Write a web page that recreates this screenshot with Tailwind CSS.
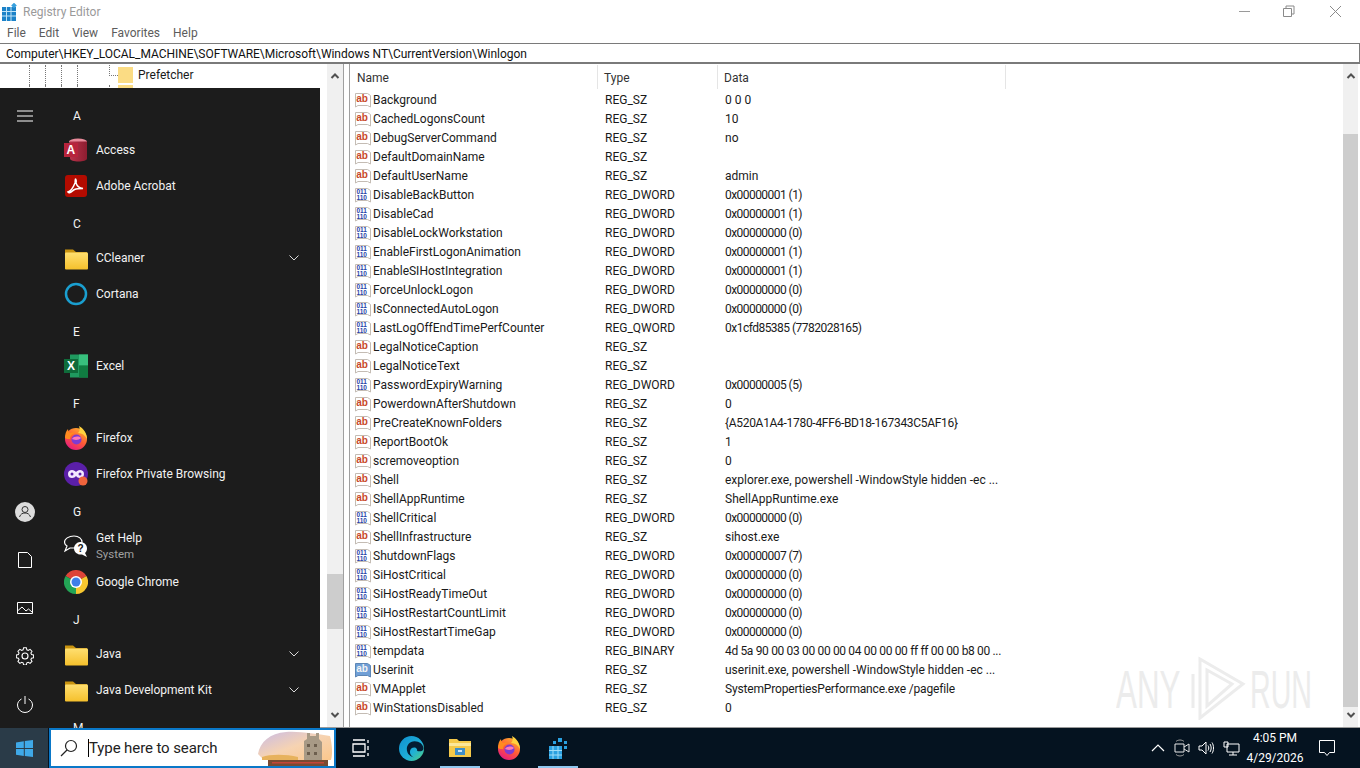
<!DOCTYPE html>
<html><head><meta charset="utf-8"><script src="https://cdn.jsdelivr.net/npm/@tailwindcss/browser@4"></script><title>Registry Editor</title></head>
<body class="overflow-hidden">
<svg class="absolute w-0 h-0" aria-hidden="true">
<defs>
<linearGradient id="fold" x1="0" y1="0" x2="0" y2="1"><stop offset="0" stop-color="#ffdf70"/><stop offset="1" stop-color="#f5c02c"/></linearGradient>
<linearGradient id="ff" x1="0.8" y1="0" x2="0.2" y2="1"><stop offset="0" stop-color="#ffb52e"/><stop offset="0.5" stop-color="#ff5a36"/><stop offset="1" stop-color="#e31587"/></linearGradient>
<linearGradient id="edge" x1="0" y1="0" x2="1" y2="1"><stop offset="0" stop-color="#0f8fd0"/><stop offset="0.6" stop-color="#1fb0d8"/><stop offset="1" stop-color="#54d27a"/></linearGradient>
<linearGradient id="acc" x1="0" y1="0" x2="1" y2="0"><stop offset="0" stop-color="#b9324a"/><stop offset="1" stop-color="#8c1d30"/></linearGradient>
<linearGradient id="sky" x1="0" y1="0" x2="1" y2="1"><stop offset="0" stop-color="#c9bbe6"/><stop offset="0.5" stop-color="#f6d3b2"/><stop offset="1" stop-color="#fbc78b"/></linearGradient>
<symbol id="ab" viewBox="0 0 16 16"><path d="M.5 1.500h12l3 2v11.500l-3-1.500H3L.5 15z" fill="#fff" stroke="#c4bcb4"/><text x="1.200" y="10" font-family="Liberation Sans" font-weight="700" font-size="10" fill="#c8482a">ab</text></symbol>
<symbol id="absel" viewBox="0 0 16 16"><path d="M.5 1.500h12l3 2v11.500l-3-1.500H3L.5 15z" fill="#6f9fd6" stroke="#5d86b5"/><text x="1.200" y="10" font-family="Liberation Sans" font-weight="700" font-size="10" fill="#f4f4f4">ab</text></symbol>
<symbol id="bin" viewBox="0 0 16 16"><path d="M.5 1.500h12l3 2v11.500l-3-1.500H3L.5 15z" fill="#fff" stroke="#c4bcb4"/><text x="1.500" y="7" font-family="Liberation Sans" font-weight="700" font-size="6.500" fill="#2742a8">011</text><text x="1.500" y="13" font-family="Liberation Sans" font-weight="700" font-size="6.500" fill="#2742a8">110</text></symbol>
<symbol id="folder" viewBox="0 0 24 24"><path d="M1 3.500h8l3 2.500h11v16.500H1z" fill="#c9930f"/><rect x="1" y="6.500" width="23" height="17" rx="1" fill="url(#fold)"/></symbol>
<symbol id="firefox" viewBox="0 0 24 24"><circle cx="12" cy="13" r="11" fill="url(#ff)"/><path d="M15 0c4 2 8 7 8 13-2-4-5-6-9-6 2-2 2-4 1-7z" fill="#ffd23f"/><path d="M1 12C1 8 2 5 4 3c0 2 1 3 2 4 2-1 4-1 5 0-3 1-5 3-5 6-2 0-4 0-5-1z" fill="#ff8a1f"/><circle cx="12.500" cy="13.500" r="5" fill="#7f3bd0"/><path d="M8 13c2-3 7-3 9-1-1 1-3 2-5 2-2 0-3-1-4-1z" fill="#ff7ab8"/></symbol>
<symbol id="chevron" viewBox="0 0 12 8"><path d="M1.500 1.500 6 6l4.500-4.500" fill="none" stroke="#d8d8d8" stroke-width="1"/></symbol>
<symbol id="up" viewBox="0 0 10 8"><path d="M1.500 6 5 2.500 8.500 6" fill="none" stroke="#505050" stroke-width="2"/></symbol>
<symbol id="down" viewBox="0 0 10 8"><path d="M1.500 2 5 5.500 8.500 2" fill="none" stroke="#505050" stroke-width="2"/></symbol>
</defs>
</svg>
<div class="relative h-screen w-full flex flex-col bg-white text-[12px] text-[#1a1a1a] overflow-hidden font-['Roboto','Noto_Sans',sans-serif]">
  <!-- title bar -->
  <div class="h-[21px] flex items-center shrink-0">
    <svg class="w-[18px] h-[18px] ml-[1px] mt-[2px]" viewBox="0 0 18 18"><rect x="1" y="4" width="14" height="14" fill="#1c82c8"/><path d="M1 8.500h14M1 13h14M5.500 4v14M10 4v14" stroke="#bfe3f7" stroke-width="1"/><rect x="11" y="0.500" width="4" height="4" fill="#39a0dd" transform="rotate(45 13 2.500)"/></svg>
    <span class="ml-[4px] mt-[2px] text-[#9a9a9a]">Registry Editor</span>
    <div class="ml-auto flex items-center mt-[1px]">
      <svg class="w-[46px] h-[21px]" viewBox="0 0 46 21"><path d="M17 10.500h11" stroke="#9a9a9a"/></svg>
      <svg class="w-[46px] h-[21px] -ml-[4px]" viewBox="0 0 46 21"><path d="M19.500 7.500h8v8h-8zM22 7.500V5h8v8h-2.500" fill="none" stroke="#8a8a8a"/></svg>
      <svg class="w-[46px] h-[21px] ml-[2px] mr-[2px]" viewBox="0 0 46 21"><path d="M18 5l11 11M29 5 18 16" stroke="#8a8a8a"/></svg>
    </div>
  </div>
  <!-- menu -->
  <div class="h-[22px] flex items-center shrink-0 pl-[7px] pt-[1px] gap-[13px] text-[#5c5c5c]"><span>File</span><span>Edit</span><span>View</span><span>Favorites</span><span>Help</span></div>
  <!-- address -->
  <div class="h-[21px] shrink-0 flex items-center border-t border-b-2 border-r border-t-[#7a7a7a] border-b-[#7a7a7a] border-r-[#7a7a7a] pl-[6px] pt-[1px] text-[#111] tracking-[-.04px]">Computer\HKEY_LOCAL_MACHINE\SOFTWARE\Microsoft\Windows NT\CurrentVersion\Winlogon</div>
  <!-- main -->
  <div class="flex-1 min-h-0 flex border-b border-[#9a9a9a]">
    <div class="w-[344px] shrink-0 flex border-r border-[#a0a0a0]">
      <div class="w-[327px] shrink-0 pt-[1px]">
        <div class="flex h-[20px] pl-[29px]">
          <span class="w-[16px] border-l border-dotted border-[#777]"></span><span class="w-[16px] border-l border-dotted border-[#777]"></span><span class="w-[16px] border-l border-dotted border-[#777]"></span><span class="w-[32px] border-l border-dotted border-[#777]"></span>
          <span class="w-[9px] border-l border-dotted border-[#777] h-[11px] border-b"></span>
          <svg class="w-[15px] h-[16px] mt-[2px]" viewBox="0 0 15 16"><rect width="15" height="16" fill="#fbdc84"/></svg>
          <span class="ml-[5px] leading-[20px]">Prefetcher</span>
        </div>
        <div class="flex h-[20px] pl-[29px]">
          <span class="w-[16px] border-l border-dotted border-[#777]"></span><span class="w-[16px] border-l border-dotted border-[#777]"></span><span class="w-[16px] border-l border-dotted border-[#777]"></span><span class="w-[32px] border-l border-dotted border-[#777]"></span>
          <span class="w-[9px] border-l border-dotted border-[#777]"></span>
          <svg class="w-[15px] h-[16px]" viewBox="0 0 15 16"><rect width="15" height="16" fill="#fbdc84"/></svg>
        </div>
      </div>
      <div class="flex-1 bg-[#f0f0f0] flex flex-col items-center justify-between py-[8px]">
        <svg class="w-[10px] h-[8px]"><use href="#up"/></svg>
        <div class="flex-1 w-full flex flex-col justify-end pb-[82px]"><div class="h-[55px] bg-[#cdcdcd]"></div></div>
        <svg class="w-[10px] h-[8px]"><use href="#down"/></svg>
      </div>
    </div>
    <div class="w-[5px] shrink-0"></div>
    <div class="flex-1 min-w-0 flex border-l border-[#a0a0a0]">
      <div class="flex-1 min-w-0">
        <div class="h-[26px] flex items-center text-[#333]">
          <span class="w-[248px] h-[24px] border-r border-[#e5e5e5] pl-[7px] leading-[26px]">Name</span>
          <span class="w-[120px] h-[24px] border-r border-[#e5e5e5] pl-[6px] leading-[26px]">Type</span>
          <span class="w-[288px] h-[24px] border-r border-[#e5e5e5] pl-[6px] leading-[26px]">Data</span>
        </div>
        <div class="flex h-[19px] items-center"><svg class="w-4 h-4 ml-[5px] shrink-0"><use href="#ab"/></svg><span class="w-[232px] ml-[2px]">Background</span><span class="w-[120px]">REG_SZ</span><span>0 0 0</span></div>
        <div class="flex h-[19px] items-center"><svg class="w-4 h-4 ml-[5px] shrink-0"><use href="#ab"/></svg><span class="w-[232px] ml-[2px]">CachedLogonsCount</span><span class="w-[120px]">REG_SZ</span><span>10</span></div>
        <div class="flex h-[19px] items-center"><svg class="w-4 h-4 ml-[5px] shrink-0"><use href="#ab"/></svg><span class="w-[232px] ml-[2px]">DebugServerCommand</span><span class="w-[120px]">REG_SZ</span><span>no</span></div>
        <div class="flex h-[19px] items-center"><svg class="w-4 h-4 ml-[5px] shrink-0"><use href="#ab"/></svg><span class="w-[232px] ml-[2px]">DefaultDomainName</span><span class="w-[120px]">REG_SZ</span><span></span></div>
        <div class="flex h-[19px] items-center"><svg class="w-4 h-4 ml-[5px] shrink-0"><use href="#ab"/></svg><span class="w-[232px] ml-[2px]">DefaultUserName</span><span class="w-[120px]">REG_SZ</span><span>admin</span></div>
        <div class="flex h-[19px] items-center"><svg class="w-4 h-4 ml-[5px] shrink-0"><use href="#bin"/></svg><span class="w-[232px] ml-[2px]">DisableBackButton</span><span class="w-[120px]">REG_DWORD</span><span class="tracking-[-.55px]">0x00000001 (1)</span></div>
        <div class="flex h-[19px] items-center"><svg class="w-4 h-4 ml-[5px] shrink-0"><use href="#bin"/></svg><span class="w-[232px] ml-[2px]">DisableCad</span><span class="w-[120px]">REG_DWORD</span><span class="tracking-[-.55px]">0x00000001 (1)</span></div>
        <div class="flex h-[19px] items-center"><svg class="w-4 h-4 ml-[5px] shrink-0"><use href="#bin"/></svg><span class="w-[232px] ml-[2px]">DisableLockWorkstation</span><span class="w-[120px]">REG_DWORD</span><span class="tracking-[-.55px]">0x00000000 (0)</span></div>
        <div class="flex h-[19px] items-center"><svg class="w-4 h-4 ml-[5px] shrink-0"><use href="#bin"/></svg><span class="w-[232px] ml-[2px]">EnableFirstLogonAnimation</span><span class="w-[120px]">REG_DWORD</span><span class="tracking-[-.55px]">0x00000001 (1)</span></div>
        <div class="flex h-[19px] items-center"><svg class="w-4 h-4 ml-[5px] shrink-0"><use href="#bin"/></svg><span class="w-[232px] ml-[2px]">EnableSIHostIntegration</span><span class="w-[120px]">REG_DWORD</span><span class="tracking-[-.55px]">0x00000001 (1)</span></div>
        <div class="flex h-[19px] items-center"><svg class="w-4 h-4 ml-[5px] shrink-0"><use href="#bin"/></svg><span class="w-[232px] ml-[2px]">ForceUnlockLogon</span><span class="w-[120px]">REG_DWORD</span><span class="tracking-[-.55px]">0x00000000 (0)</span></div>
        <div class="flex h-[19px] items-center"><svg class="w-4 h-4 ml-[5px] shrink-0"><use href="#bin"/></svg><span class="w-[232px] ml-[2px]">IsConnectedAutoLogon</span><span class="w-[120px]">REG_DWORD</span><span class="tracking-[-.55px]">0x00000000 (0)</span></div>
        <div class="flex h-[19px] items-center"><svg class="w-4 h-4 ml-[5px] shrink-0"><use href="#bin"/></svg><span class="w-[232px] ml-[2px]">LastLogOffEndTimePerfCounter</span><span class="w-[120px]">REG_QWORD</span><span class="tracking-[-.52px]">0x1cfd85385 (7782028165)</span></div>
        <div class="flex h-[19px] items-center"><svg class="w-4 h-4 ml-[5px] shrink-0"><use href="#ab"/></svg><span class="w-[232px] ml-[2px]">LegalNoticeCaption</span><span class="w-[120px]">REG_SZ</span><span></span></div>
        <div class="flex h-[19px] items-center"><svg class="w-4 h-4 ml-[5px] shrink-0"><use href="#ab"/></svg><span class="w-[232px] ml-[2px]">LegalNoticeText</span><span class="w-[120px]">REG_SZ</span><span></span></div>
        <div class="flex h-[19px] items-center"><svg class="w-4 h-4 ml-[5px] shrink-0"><use href="#bin"/></svg><span class="w-[232px] ml-[2px]">PasswordExpiryWarning</span><span class="w-[120px]">REG_DWORD</span><span class="tracking-[-.55px]">0x00000005 (5)</span></div>
        <div class="flex h-[19px] items-center"><svg class="w-4 h-4 ml-[5px] shrink-0"><use href="#ab"/></svg><span class="w-[232px] ml-[2px]">PowerdownAfterShutdown</span><span class="w-[120px]">REG_SZ</span><span>0</span></div>
        <div class="flex h-[19px] items-center"><svg class="w-4 h-4 ml-[5px] shrink-0"><use href="#ab"/></svg><span class="w-[232px] ml-[2px]">PreCreateKnownFolders</span><span class="w-[120px]">REG_SZ</span><span class="tracking-[-.3px]">{A520A1A4-1780-4FF6-BD18-167343C5AF16}</span></div>
        <div class="flex h-[19px] items-center"><svg class="w-4 h-4 ml-[5px] shrink-0"><use href="#ab"/></svg><span class="w-[232px] ml-[2px]">ReportBootOk</span><span class="w-[120px]">REG_SZ</span><span>1</span></div>
        <div class="flex h-[19px] items-center"><svg class="w-4 h-4 ml-[5px] shrink-0"><use href="#ab"/></svg><span class="w-[232px] ml-[2px]">scremoveoption</span><span class="w-[120px]">REG_SZ</span><span>0</span></div>
        <div class="flex h-[19px] items-center"><svg class="w-4 h-4 ml-[5px] shrink-0"><use href="#ab"/></svg><span class="w-[232px] ml-[2px]">Shell</span><span class="w-[120px]">REG_SZ</span><span>explorer.exe, powershell -WindowStyle hidden -ec ...</span></div>
        <div class="flex h-[19px] items-center"><svg class="w-4 h-4 ml-[5px] shrink-0"><use href="#ab"/></svg><span class="w-[232px] ml-[2px]">ShellAppRuntime</span><span class="w-[120px]">REG_SZ</span><span>ShellAppRuntime.exe</span></div>
        <div class="flex h-[19px] items-center"><svg class="w-4 h-4 ml-[5px] shrink-0"><use href="#bin"/></svg><span class="w-[232px] ml-[2px]">ShellCritical</span><span class="w-[120px]">REG_DWORD</span><span class="tracking-[-.55px]">0x00000000 (0)</span></div>
        <div class="flex h-[19px] items-center"><svg class="w-4 h-4 ml-[5px] shrink-0"><use href="#ab"/></svg><span class="w-[232px] ml-[2px]">ShellInfrastructure</span><span class="w-[120px]">REG_SZ</span><span>sihost.exe</span></div>
        <div class="flex h-[19px] items-center"><svg class="w-4 h-4 ml-[5px] shrink-0"><use href="#bin"/></svg><span class="w-[232px] ml-[2px]">ShutdownFlags</span><span class="w-[120px]">REG_DWORD</span><span class="tracking-[-.55px]">0x00000007 (7)</span></div>
        <div class="flex h-[19px] items-center"><svg class="w-4 h-4 ml-[5px] shrink-0"><use href="#bin"/></svg><span class="w-[232px] ml-[2px]">SiHostCritical</span><span class="w-[120px]">REG_DWORD</span><span class="tracking-[-.55px]">0x00000000 (0)</span></div>
        <div class="flex h-[19px] items-center"><svg class="w-4 h-4 ml-[5px] shrink-0"><use href="#bin"/></svg><span class="w-[232px] ml-[2px]">SiHostReadyTimeOut</span><span class="w-[120px]">REG_DWORD</span><span class="tracking-[-.55px]">0x00000000 (0)</span></div>
        <div class="flex h-[19px] items-center"><svg class="w-4 h-4 ml-[5px] shrink-0"><use href="#bin"/></svg><span class="w-[232px] ml-[2px]">SiHostRestartCountLimit</span><span class="w-[120px]">REG_DWORD</span><span class="tracking-[-.55px]">0x00000000 (0)</span></div>
        <div class="flex h-[19px] items-center"><svg class="w-4 h-4 ml-[5px] shrink-0"><use href="#bin"/></svg><span class="w-[232px] ml-[2px]">SiHostRestartTimeGap</span><span class="w-[120px]">REG_DWORD</span><span class="tracking-[-.55px]">0x00000000 (0)</span></div>
        <div class="flex h-[19px] items-center"><svg class="w-4 h-4 ml-[5px] shrink-0"><use href="#bin"/></svg><span class="w-[232px] ml-[2px]">tempdata</span><span class="w-[120px]">REG_BINARY</span><span class="tracking-[-.34px]">4d 5a 90 00 03 00 00 00 04 00 00 00 ff ff 00 00 b8 00 ...</span></div>
        <div class="flex h-[19px] items-center"><svg class="w-4 h-4 ml-[5px] shrink-0"><use href="#absel"/></svg><span class="w-[232px] ml-[2px]">Userinit</span><span class="w-[120px]">REG_SZ</span><span>userinit.exe, powershell -WindowStyle hidden -ec ...</span></div>
        <div class="flex h-[19px] items-center"><svg class="w-4 h-4 ml-[5px] shrink-0"><use href="#ab"/></svg><span class="w-[232px] ml-[2px]">VMApplet</span><span class="w-[120px]">REG_SZ</span><span class="tracking-[-.17px]">SystemPropertiesPerformance.exe /pagefile</span></div>
        <div class="flex h-[19px] items-center"><svg class="w-4 h-4 ml-[5px] shrink-0"><use href="#ab"/></svg><span class="w-[232px] ml-[2px]">WinStationsDisabled</span><span class="w-[120px]">REG_SZ</span><span>0</span></div>
      </div>
      <div class="w-[15px] mr-[2px] shrink-0 bg-[#f0f0f0] flex flex-col items-center justify-between py-[8px]">
        <svg class="w-[10px] h-[8px]"><use href="#up"/></svg>
        <div class="flex-1 w-full flex flex-col justify-end pb-[4px] pt-[54px]"><div class="h-[573px] bg-[#cdcdcd]"></div></div>
        <svg class="w-[10px] h-[8px]"><use href="#down"/></svg>
      </div>
    </div>
  </div>
  <!-- taskbar -->
  <div class="h-10 shrink-0 flex items-center bg-[#051320] text-white">
    <div class="w-[48px] h-full bg-[#2a3b48] flex items-center justify-center">
      <svg class="w-[17px] h-[17px]" viewBox="0 0 17 17"><path d="M0 2.400 7.800 1.200v6.900H0zM8.800 1l8.200-1v8.100H8.800zM0 9h7.800v6.900L0 14.700zM8.800 9H17v8l-8.200-1.100z" fill="#3fa9e8"/></svg>
    </div>
    <div class="ml-[1px] w-[287px] h-full border-2 border-t-[2px] border-[#0a78c8] bg-white flex items-center text-[#222] relative overflow-hidden">
      <svg class="w-[18px] h-[18px] ml-[9px]" viewBox="0 0 18 18"><circle cx="11" cy="7" r="5.500" fill="none" stroke="#222" stroke-width="1.200"/><path d="M7 11 1 17" stroke="#222" stroke-width="1.200"/></svg>
      <span class="ml-[10px] w-px h-[18px] bg-black"></span>
      <span class="text-[15px] mt-[1px] tracking-[-.1px]">Type here to search</span>
      <svg class="absolute right-0 top-0 w-[78px] h-[36px]" viewBox="0 0 78 36"><path d="M2 24C4 12 14 3 30 2c14-1 30 2 44 4 2 8 3 18 1 24H8z" fill="url(#sky)"/><path d="M48 32V11l3-2V3h3v3h6V3h3v6l3 3v20z" fill="#a89a86"/><path d="M51 14h3v3h-3zM58 14h3v3h-3zM51 22h3v3h-3zM58 22h3v3h-3z" fill="#6d5f4e"/><path d="M6 27c8-3 24-3 36 0v3H6z" fill="#e7b25c"/><path d="M12 30h60v6H12z" fill="#7a4a32"/><path d="M16 32h52v1.500H16z" fill="#c4453a"/></svg>
    </div>
    <svg class="ml-[16px] w-[18px] h-[18px]" viewBox="0 0 18 18"><path d="M1 1h12M1 17h12M1 5h12v8H1zM16 1v3M16 7v4M16 14v3" fill="none" stroke="#fff" stroke-width="1.300"/></svg>
    <svg class="ml-[29px] w-[25px] h-[25px]" viewBox="0 0 24 24"><circle cx="12" cy="12" r="12" fill="url(#edge)"/><path d="M23.500 12c0-4-4-7-8.500-7-5 0-7.500 4-7.500 7.500 0 5 4 8 8 8-3 0-5-3-5-5.500s2-4 4-4c3 0 3 2.500 3 3.500 3 .5 6 0 6-2.500z" fill="#041c33"/></svg>
    <div class="ml-[16px] w-[40px] h-full flex flex-col items-center justify-center relative">
      <svg class="w-[22px] h-[20px]" viewBox="0 0 22 20"><path d="M0 1h8l2 2h12v16H0z" fill="#f5c94a"/><path d="M0 5h22v3H0z" fill="#fce79a"/><path d="M6 10h10v7H6z" fill="#3f8fc9"/><path d="M9 12h4v2H9z" fill="#cfe6f5"/></svg>
      <span class="absolute bottom-0 left-0 right-0 h-[2px] bg-[#8fc6ee]"></span>
    </div>
    <svg class="ml-[17px] w-[24px] h-[24px]"><use href="#firefox"/></svg>
    <div class="ml-[17px] w-[40px] h-full flex flex-col items-center justify-center relative">
      <svg class="w-[22px] h-[22px]" viewBox="0 0 22 22"><g fill="#2aa0e0"><path d="M2 9h13v13H2z"/><path d="M11 1h4v4h-4zM17 4h3v3h-3zM17 9h3v3h-3zM6 4h3v3H6z"/></g><path d="M6 9v13M11 9v13M2 13.500h13M2 18h13" stroke="#9fdcf8" stroke-width="1"/></svg>
      <span class="absolute bottom-0 left-0 right-0 h-[2px] bg-[#8fc6ee]"></span>
    </div>
    <div class="ml-auto flex items-center">
      <svg class="w-[14px] h-[8px]" viewBox="0 0 14 8"><path d="M1 7 7 1l6 6" fill="none" stroke="#fff" stroke-width="1.200"/></svg>
      <svg class="ml-[9px] w-[16px] h-[18px]" viewBox="0 0 16 18"><path d="M1 5h9v8H1zM10 8l5-3v8l-5-3" fill="none" stroke="#e8e8e8"/><path d="M2 2.500c2-2 6-2 8 0M2 15.500c2 2 6 2 8 0" fill="none" stroke="#999"/></svg>
      <svg class="ml-[8px] w-[16px] h-[14px]" viewBox="0 0 16 14"><path d="M1 5h3l4-4v12l-4-4H1zM10 4.500c1 1.500 1 3.500 0 5M12 3c1.600 2.500 1.600 5.500 0 8M14 1.500c2 3 2 8 0 11" fill="none" stroke="#fff"/></svg>
      <svg class="ml-[9px] w-[17px] h-[15px]" viewBox="0 0 17 15"><path d="M4 3h12v8H4zM10 11v3M6 14h8M1 1h4v5H1z" fill="#051320" stroke="#fff"/></svg>
      <div class="w-[70px] flex flex-col items-center leading-[20px] text-[12px] text-white"><span>4:05 PM</span><span>4/29/2026</span></div>
      <svg class="ml-[9px] mr-[25px] w-[16px] h-[16px]" viewBox="0 0 16 16"><path d="M.5.500h15v12h-5l-2.500 3-2.500-3h-5z" fill="none" stroke="#fff"/></svg>
    </div>
  </div>
  <!-- start menu -->
  <div class="absolute left-0 top-[88px] w-[320px] h-[640px] bg-[#1c1c1c] text-[#f2f2f2] flex overflow-hidden text-[12px]">
    <div class="w-[50px] shrink-0 flex flex-col items-center pt-[10px]">
      <div class="h-[36px] flex items-center"><svg class="w-[16px] h-[12px]" viewBox="0 0 16 12"><path d="M0 1h16M0 6h16M0 11h16" stroke="#fff"/></svg></div>
      <div class="mt-auto h-[48px] flex items-center"><svg class="w-[20px] h-[20px]" viewBox="0 0 20 20"><circle cx="10" cy="10" r="10" fill="#dcdcdc"/><circle cx="10" cy="7.500" r="3" fill="none" stroke="#333"/><path d="M4.500 15c1-3 3-4 5.500-4s4.500 1 5.500 4" fill="none" stroke="#333"/></svg></div>
      <div class="h-[48px] flex items-center"><svg class="w-[14px] h-[16px]" viewBox="0 0 14 16"><path d="M.5.500h9l4 4v11H.5z" fill="none" stroke="#fff"/></svg></div>
      <div class="h-[48px] flex items-center"><svg class="w-[16px] h-[12px]" viewBox="0 0 16 12"><path d="M.5.500h15v11H.5zM.5 9l4.500-4 4 4 2.500-2 3.500 3" fill="none" stroke="#fff"/></svg></div>
      <div class="h-[48px] flex items-center"><svg class="w-[18px] h-[18px]" viewBox="0 0 24 24"><path d="M10 1h4l.700 3 2 .900 2.700-1.600 2.800 2.800-1.600 2.700.9 2 3 .700v4l-3 .7-.9 2 1.600 2.700-2.800 2.800-2.700-1.600-2 .9-.7 3h-4l-.7-3-2-.9-2.700 1.600-2.800-2.800 1.600-2.700-.9-2-3-.7v-4l3-.7.9-2-1.600-2.700 2.800-2.800 2.700 1.600 2-.9z" transform="scale(.92) translate(1 0)" fill="none" stroke="#fff" stroke-width="1.500"/><circle cx="12" cy="12" r="4" fill="none" stroke="#fff" stroke-width="1.500"/></svg></div>
      <div class="h-[48px] flex items-center"><svg class="w-[16px] h-[17px]" viewBox="0 0 16 17"><path d="M8 0v8M4.500 3C2 4.300.5 6.500.5 9a7.500 7.500 0 0 0 15 0c0-2.500-1.500-4.700-4-6" fill="none" stroke="#fff"/></svg></div>
    </div>
    <div class="flex-1 min-w-0 pt-[8px]">
      <div class="h-[36px] pt-[4px] pl-[23px] flex items-center">A</div>
      <div class="h-[36px] flex items-center pl-[14px]"><svg class="w-[24px] h-[24px]" viewBox="0 0 24 24"><ellipse cx="14" cy="3.500" rx="9" ry="3" fill="#e88a9a"/><path d="M6 3.500h17v17c0 2-4 3-8.500 3S6 22.500 6 20.500z" fill="url(#acc)"/><rect y="5" width="14" height="14" fill="#b7243c"/><text x="2.500" y="16" font-family="Liberation Sans" font-size="12" font-weight="700" fill="#fff">A</text></svg><span class="ml-[8px]">Access</span></div>
      <div class="h-[36px] flex items-center pl-[14px]"><svg class="w-[24px] h-[24px]" viewBox="0 0 24 24"><rect x="1" y="1" width="22" height="22" rx="3" fill="#b30b00"/><path d="M4 18c3-1 5-4 7-9 .5-2 0-4 .5-4s1 2 .5 4c1 3 3 5 7 5.500-3 0-6 0-8.500 1C8 17 5.500 20 4 18z" fill="none" stroke="#fff" stroke-width="1.500"/></svg><span class="ml-[8px]">Adobe Acrobat</span></div>
      <div class="h-[36px] pt-[4px] pl-[23px] flex items-center">C</div>
      <div class="h-[36px] flex items-center pl-[14px]"><svg class="w-[24px] h-[24px]"><use href="#folder"/></svg><span class="ml-[8px]">CCleaner</span><svg class="ml-auto mr-[20px] w-[12px] h-[8px]"><use href="#chevron"/></svg></div>
      <div class="h-[36px] flex items-center pl-[14px]"><svg class="w-[24px] h-[24px]" viewBox="0 0 24 24"><circle cx="12" cy="12" r="10" fill="none" stroke="#1a9fd0" stroke-width="2.500"/></svg><span class="ml-[8px]">Cortana</span></div>
      <div class="h-[36px] pt-[4px] pl-[23px] flex items-center">E</div>
      <div class="h-[36px] flex items-center pl-[14px]"><svg class="w-[24px] h-[24px]" viewBox="0 0 24 24"><rect x="6" y="0.500" width="18" height="23" fill="#1f9a5f"/><rect x="15" y="0.500" width="9" height="11" fill="#38c07d"/><rect x="15" y="11.500" width="9" height="12" fill="#107c41"/><rect y="5" width="14" height="14" fill="#0f6b3a"/><text x="3" y="16" font-family="Liberation Sans" font-size="12" font-weight="700" fill="#fff">X</text></svg><span class="ml-[8px]">Excel</span></div>
      <div class="h-[36px] pt-[4px] pl-[23px] flex items-center">F</div>
      <div class="h-[36px] flex items-center pl-[14px]"><svg class="w-[24px] h-[24px]"><use href="#firefox"/></svg><span class="ml-[8px]">Firefox</span></div>
      <div class="h-[36px] flex items-center pl-[14px]"><svg class="w-[24px] h-[24px]" viewBox="0 0 24 24"><circle cx="12" cy="12" r="12" fill="#5a1fa8"/><path d="M4 12c0-3 2-4 4-4 2 0 3 1 4 2 1-1 2-2 4-2 2 0 4 1 4 4s-2 4-4 4c-2 0-3-1-4-2-1 1-2 2-4 2-2 0-4-1-4-4z" fill="#f3e8ff"/><circle cx="8" cy="12" r="1.500" fill="#5a1fa8"/><circle cx="16" cy="12" r="1.500" fill="#5a1fa8"/><circle cx="19" cy="19" r="4.500" fill="#f0643c"/></svg><span class="ml-[8px]">Firefox Private Browsing</span></div>
      <div class="h-[36px] pt-[4px] pl-[23px] flex items-center">G</div>
      <div class="h-[36px] flex items-center pl-[14px]"><svg class="w-[24px] h-[24px]" viewBox="0 0 24 24"><path d="M10 2c5 0 8 3 8 6s-3 6-8 6H6l-5 3 2-5C1 11 .5 9.500 .5 8c0-3 4-6 9.500-6z" fill="#1c1c1c" stroke="#fff" stroke-width="1.200"/><path d="M16 8c4 0 7 2.500 7 6.500 0 2-1 3.500-2 4.500l2 4-5-2.500c-4 .5-8-2-8-6 0-3.500 3-6.500 6-6.500z" fill="#fff"/><text x="13.500" y="18" font-family="Liberation Sans" font-size="10" font-weight="700" fill="#111">?</text></svg><div class="ml-[8px] flex flex-col leading-[16px]"><span>Get Help</span><span class="text-[11.500px] text-[#a0a0a0]">System</span></div></div>
      <div class="h-[36px] flex items-center pl-[14px]"><svg class="w-[24px] h-[24px]" viewBox="0 0 24 24"><path d="M12 12 1.600 6A12 12 0 0 1 22.400 6z" fill="#dd4438"/><path d="M12 12 22.400 6A12 12 0 0 1 12 24z" fill="#f7c62f"/><path d="M12 12 12 24A12 12 0 0 1 1.600 6z" fill="#23a455"/><circle cx="12" cy="12" r="6" fill="#fff"/><circle cx="12" cy="12" r="4.500" fill="#3f7fe8"/></svg><span class="ml-[8px]">Google Chrome</span></div>
      <div class="h-[36px] pt-[4px] pl-[23px] flex items-center">J</div>
      <div class="h-[36px] flex items-center pl-[14px]"><svg class="w-[24px] h-[24px]"><use href="#folder"/></svg><span class="ml-[8px]">Java</span><svg class="ml-auto mr-[20px] w-[12px] h-[8px]"><use href="#chevron"/></svg></div>
      <div class="h-[36px] flex items-center pl-[14px]"><svg class="w-[24px] h-[24px]"><use href="#folder"/></svg><span class="ml-[8px]">Java Development Kit</span><svg class="ml-auto mr-[20px] w-[12px] h-[8px]"><use href="#chevron"/></svg></div>
      <div class="h-[36px] pt-[4px] pl-[23px] flex items-center">M</div>
    </div>
  </div>
  <!-- watermark -->
  <div class="absolute left-[1116px] top-[655px] flex items-center text-[#ececec] font-['Liberation_Sans',sans-serif] text-[54px] leading-[64px] pointer-events-none">
    <span class="w-[72px] scale-x-[.58] origin-left mt-[2px]">ANY</span>
    <svg class="w-[62px] h-[64px]" viewBox="0 0 62 64"><path d="M5 18v34M12 3l43 25-43 34zM19 14l25 14-25 22z" fill="none" stroke="#ececec" stroke-width="3"/></svg>
    <span class="scale-x-[.53] origin-left mt-[2px]">RUN</span>
  </div>
</div>
</body></html>
